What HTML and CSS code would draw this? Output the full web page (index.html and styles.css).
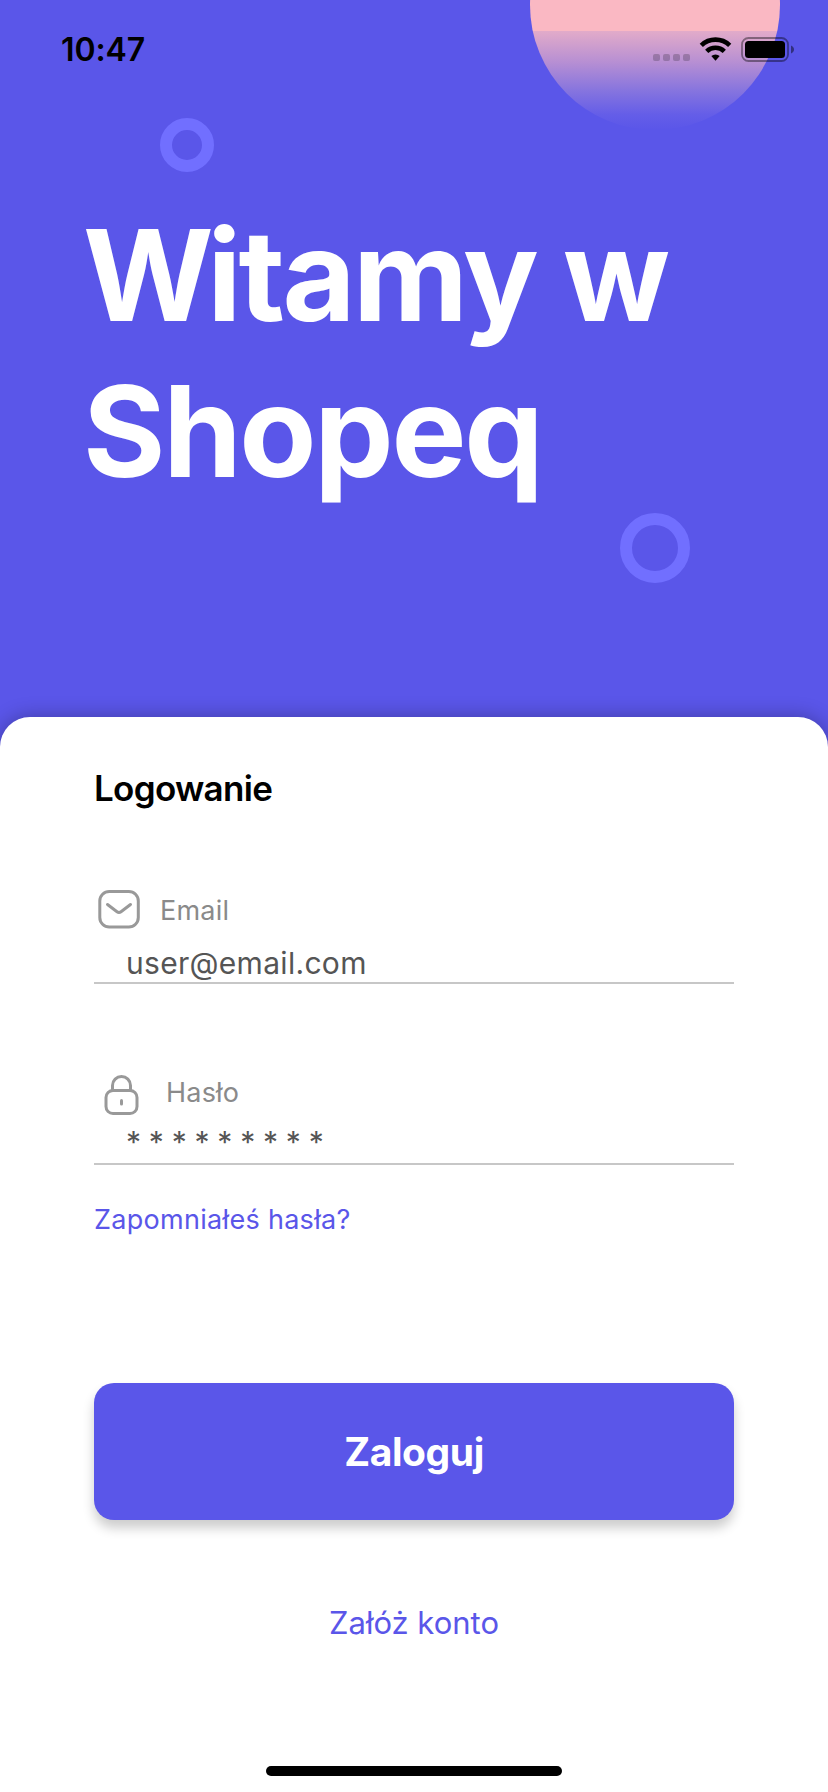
FILE: index.html
```html
<!DOCTYPE html>
<html lang="pl">
<head>
<meta charset="utf-8">
<title>Shopeq</title>
<link rel="stylesheet" href="styles.css">
</head>
<body>
<div class="screen">
  <header class="hero">
    <div class="sun"></div>
    <div class="ring ring-small"></div>
    <div class="ring ring-large"></div>
    <div class="status">
      <span class="time">10:47</span>
      <svg class="indicators" width="142" height="26" viewBox="0 0 142 26">
        <g fill="#000" fill-opacity=".2">
          <rect x="0" y="17" width="7" height="7" rx="2"/>
          <rect x="10" y="17" width="7" height="7" rx="2"/>
          <rect x="20" y="17" width="7" height="7" rx="2"/>
          <rect x="30" y="17" width="7" height="7" rx="2"/>
        </g>
        <g fill="none" stroke="#000" stroke-width="4.600">
          <path d="M48.300 8.400a20.400 20.400 0 0 1 28.400 0"/>
          <path d="M53.700 14.300a12.700 12.700 0 0 1 17.600 0"/>
        </g>
        <path d="M58.300 19a6.400 6.400 0 0 1 8.400 0L62.500 23.800Z"/>
        <rect x="89" y="1" width="46" height="23" rx="6.500" fill="none" stroke="#000" stroke-opacity=".4" stroke-width="1.800"/>
        <rect x="92" y="4" width="40" height="17" rx="3.500"/>
        <path d="M138 8.500c4 1.500 4 6.500 0 8Z" fill-opacity=".45"/>
      </svg>
    </div>
    <h1 class="title"><span class="initial">W</span>itamy w<br><span class="brand">Shopeq</span></h1>
  </header>
  <main class="card">
    <h2 class="heading">Logowanie</h2>
    <div class="field">
      <div class="label label-email">
        <svg width="44" height="42" viewBox="0 0 44 42" fill="none" stroke="#999" stroke-width="3" stroke-linecap="round" stroke-linejoin="round">
          <rect x="2.800" y="2.500" width="38.500" height="35.500" rx="9.500"/>
          <path d="M10.500 15.500L20 22.700q2 1.500 4 0l9.500-7.200"/>
        </svg>
        <span>Email</span>
      </div>
      <div class="value">user@email.com</div>
    </div>
    <div class="field field-password">
      <div class="label label-password">
        <svg width="38" height="44" viewBox="0 0 38 44" fill="none" stroke="#999" stroke-width="3" stroke-linecap="round">
          <rect x="3" y="16.500" width="31" height="23" rx="7"/>
          <path d="M9.500 16v-4.500a9 9 0 0 1 18 0v4.500"/>
          <path d="M18.500 26.500v3.500"/>
        </svg>
        <span>Hasło</span>
      </div>
      <div class="value stars">*********</div>
    </div>
    <a class="link forgot">Zapomniałeś hasła?</a>
    <button class="submit">Zaloguj</button>
    <a class="link signup">Załóż konto</a>
    <div class="home-bar"></div>
  </main>
</div>
</body>
</html>
```
FILE: styles.css
```css
* { box-sizing: border-box; }
body { margin: 0; font-family: Inter, "Liberation Sans", sans-serif; }
.screen {
  width: 828px;
  height: 1792px;
  display: flex;
  flex-direction: column;
  overflow: hidden;
  background: #5a56e9;
}
.hero { position: relative; height: 717px; flex: none; }
.sun {
  position: absolute;
  left: 530px;
  top: -120px;
  width: 250px;
  height: 250px;
  border-radius: 50%;
  background: linear-gradient(#fab8c3 151px, #e2abc9 151px, #b78fd3 182px, #8473df 212px, #645de8 235px, #5a56e9 250px);
}
.ring { position: absolute; border: 12px solid #716fff; border-radius: 50%; }
.ring-small { left: 160px; top: 118px; width: 54px; height: 54px; }
.ring-large { left: 620px; top: 513px; width: 70px; height: 70px; }
.status {
  position: relative;
  display: flex;
  justify-content: space-between;
  align-items: flex-start;
  height: 197px;
  padding: 30px 33px 0 61px;
}
.time { font-size: 32px; line-height: 40px; font-weight: 600; letter-spacing: -0.1px; }
.indicators { margin-top: 7px; }
.title {
  position: relative;
  margin: 0;
  padding-left: 83px;
  font-size: 126px;
  line-height: 156px;
  font-weight: 700;
  color: #fff;
  white-space: nowrap;
  letter-spacing: -2.8px;
}
.initial { letter-spacing: -6.5px; }
.brand { letter-spacing: -2.3px; }
.card {
  position: relative;
  flex: 1;
  display: flex;
  flex-direction: column;
  padding: 48px 94px 0;
  border-radius: 30px 30px 0 0;
  background: #fff;
  box-shadow: 0 0 20px rgba(0, 0, 0, .3);
}
.heading { margin: 0; font-size: 35px; line-height: 46px; font-weight: 600; letter-spacing: -0.7px; }
.field { margin-top: 76px; height: 97px; border-bottom: 2px solid #c7c7c7; }
.field-password { margin-top: 84px; }
.label { display: flex; font-size: 27px; line-height: 36px; color: #8a8a8a; letter-spacing: 0.2px; }
.label svg { flex: none; }
.label-email { padding: 2px 0 0 3px; gap: 19px; height: 56px; }
.label-email span { padding-top: 4px; }
.label-password { padding: 6px 0 0 9px; gap: 25px; height: 54px; }
.label-password span { padding-top: 1px; }
.value { padding-left: 32px; font-size: 30px; line-height: 40px; color: #555; letter-spacing: 0.3px; }
.stars { letter-spacing: 7.8px; }
.link { color: #5a56e9; }
.forgot { padding-top: 37px; height: 72px; font-size: 27px; line-height: 35px; letter-spacing: 0.3px; }
.submit {
  margin-top: 146px;
  height: 137px;
  flex: none;
  border: 0;
  padding: 0;
  border-radius: 20px;
  background: #5a56e9;
  color: #fff;
  font: 700 39px/50px Inter, sans-serif;
  letter-spacing: -0.4px;
  box-shadow: 0 8px 12px rgba(0, 0, 0, .2);
}
.signup { margin-top: 83px; font-size: 31px; line-height: 40px; text-align: center; }
.home-bar { width: 296px; height: 10px; margin: 123px auto 0; border-radius: 5px; background: #000; }
```
